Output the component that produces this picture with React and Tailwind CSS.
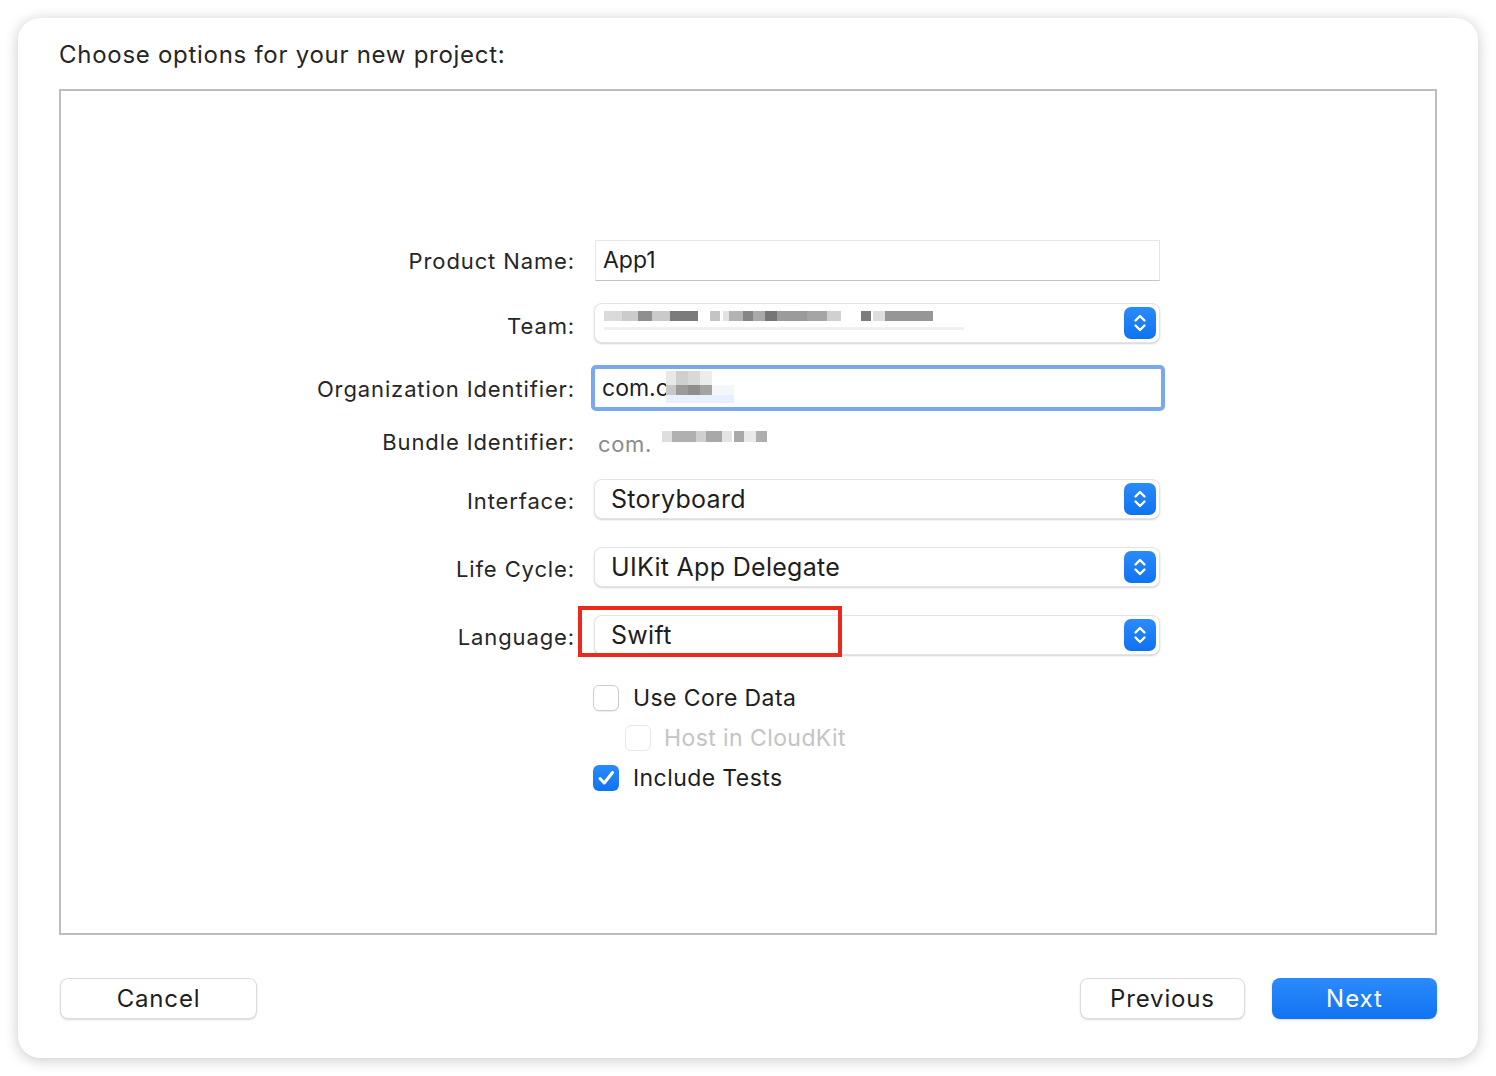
import React from "react";

const font = { fontFamily: "Inter, 'Noto Sans', 'Liberation Sans', sans-serif" };

function Stepper() {
  return (
    <div className="w-[32px] h-[32px] rounded-[7px] bg-gradient-to-b from-[#2a8bfb] to-[#0f72f0] flex items-center justify-center shrink-0">
      <svg width="32" height="32" viewBox="0 0 32 32" fill="none">
        <path d="M11.5 13.5 L16 9 L20.5 13.5" stroke="white" strokeWidth="2.4" strokeLinecap="round" strokeLinejoin="round" />
        <path d="M11.5 18.5 L16 23 L20.5 18.5" stroke="white" strokeWidth="2.4" strokeLinecap="round" strokeLinejoin="round" />
      </svg>
    </div>
  );
}

function Popup({ children }) {
  return (
    <div className="w-[566px] h-[40px] rounded-[8px] bg-white border border-[#e4e4e4] shadow-[0_1px_2px_rgba(0,0,0,0.18)] flex items-center justify-between pl-[16px] pr-[3px]">
      <div className="text-[25px] tracking-[0.012em] text-[#1e1e1e] leading-none">{children}</div>
      <Stepper />
    </div>
  );
}

function Label({ children, className = "" }) {
  return (
    <div className={"w-[514px] shrink-0 text-right text-[22px] tracking-[0.04em] text-[#262626] leading-none " + className}>
      {children}
    </div>
  );
}

function Blocks({ items, h = 10 }) {
  return (
    <div className="flex items-center">
      {items.map(([w, c, gap], i) => (
        <div key={i} style={{ width: w, height: h, background: c, marginLeft: gap || 0 }} />
      ))}
    </div>
  );
}

function Checkbox({ checked, disabled }) {
  if (checked) {
    return (
      <div className="w-[26px] h-[26px] rounded-[6px] bg-gradient-to-b from-[#2a8bfb] to-[#0f72f0] flex items-center justify-center shrink-0">
        <svg width="26" height="26" viewBox="0 0 26 26" fill="none">
          <path d="M7 13.5 L11.3 18 L19.5 7.5" stroke="white" strokeWidth="3" strokeLinecap="round" strokeLinejoin="round" />
        </svg>
      </div>
    );
  }
  return (
    <div
      className={
        "w-[26px] h-[26px] rounded-[6px] bg-white shrink-0 border " +
        (disabled ? "border-[#e8e8e8]" : "border-[#cdcdcd] shadow-[0_1px_1px_rgba(0,0,0,0.08)]")
      }
    />
  );
}

export default function App() {
  return (
    <div className="w-[1496px] h-[1076px] bg-white p-[18px]" style={font}>
      <div className="w-[1460px] h-[1040px] rounded-[22px] bg-white shadow-[0_2px_14px_rgba(0,0,0,0.22)] px-[41px] pt-[22px] flex flex-col">
        <div className="h-[30px] leading-[30px] text-[24px] tracking-[0.03em] text-[#262626]">Choose options for your new project:</div>
        <div className="mt-[19px] h-[846px] border-2 border-[#bdbdbd] pt-[149px] flex flex-col">
          {/* Product Name */}
          <div className="flex items-center h-[41px]">
            <Label>Product Name:</Label>
            <div className="ml-[20px] w-[565px] h-[41px] bg-white border border-[#e6e6e6] border-b-[#c4c4c4] flex items-center pl-[7px]">
              <span className="text-[23px] text-[#1e1e1e] leading-none">App1</span>
            </div>
          </div>
          {/* Team */}
          <div className="flex items-center h-[40px] mt-[22px]">
            <Label className="pt-[5px]">Team:</Label>
            <div className="ml-[19px]">
              <div className="w-[566px] h-[40px] rounded-[8px] bg-white border border-[#e4e4e4] shadow-[0_1px_2px_rgba(0,0,0,0.18)] flex items-center justify-between pl-[9px] pr-[3px]">
                <div className="flex flex-col gap-[6px] -mt-[6px]">
                  <div className="flex items-center">
                    <Blocks
                      items={[
                        [18, "#dadada"],
                        [16, "#cbcbcb"],
                        [14, "#8f8f8f"],
                        [18, "#cacaca"],
                        [28, "#7b7b7b"],
                        [10, "#c4c4c4", 12],
                        [6, "#e2e2e2", 3],
                        [14, "#b3b3b3"],
                        [10, "#858585"],
                        [12, "#a9a9a9"],
                        [12, "#767676"],
                        [30, "#9b9b9b"],
                        [20, "#a5a5a5"],
                        [14, "#d0d0d0"],
                        [10, "#7c7c7c", 20],
                        [12, "#dedede", 2],
                        [48, "#969696"],
                      ]}
                    />
                  </div>
                  <div className="w-[360px] h-[3px] bg-[#f1f1f1]" />
                </div>
                <Stepper />
              </div>
            </div>
          </div>
          {/* Organization Identifier */}
          <div className="flex items-center h-[46px] mt-[22px]">
            <Label className="pt-[1px]">Organization Identifier:</Label>
            <div className="ml-[16px] w-[574px] h-[46px] rounded-[5px] border-[4px] border-[#7aa8ee] bg-white flex items-center pl-[7px]">
              <span className="text-[23px] text-[#1e1e1e] leading-none">com.c</span>
              <div className="flex flex-col -ml-[3px] -mt-[2px]">
                <div className="flex">
                  <div className="w-[10px] h-[14px] bg-[#e8e8e8]" />
                  <div className="w-[12px] h-[14px] bg-[#cfcfcf]" />
                  <div className="w-[12px] h-[14px] bg-[#d8d8d8]" />
                  <div className="w-[12px] h-[14px] bg-[#ececec]" />
                </div>
                <div className="flex">
                  <div className="w-[10px] h-[10px] bg-[#c8c8c8]" />
                  <div className="w-[12px] h-[10px] bg-[#9a9a9a]" />
                  <div className="w-[12px] h-[10px] bg-[#8e8e8e]" />
                  <div className="w-[12px] h-[10px] bg-[#a3a3a3]" />
                  <div className="w-[22px] h-[10px] bg-[#f4f6fa]" />
                </div>
                <div className="w-[68px] h-[8px] bg-[#e8f0fd]" />
              </div>
            </div>
          </div>
          {/* Bundle Identifier */}
          <div className="flex items-center h-[40px] mt-[10px]">
            <Label className="pt-[1px]">Bundle Identifier:</Label>
            <div className="ml-[23px] flex items-center">
              <span className="text-[22px] tracking-[0.03em] text-[#8a8a8a] leading-none pt-[5px]">com.</span>
              <div className="-mt-[10px] flex items-center">
                <Blocks
                  h={11}
                  items={[
                    [10, "#dedede", 10],
                    [24, "#b0b0b0"],
                    [10, "#cfcfcf"],
                    [16, "#a8a8a8"],
                    [10, "#e4e4e4"],
                    [10, "#a9a9a9", 2],
                    [12, "#e9e9e9"],
                    [11, "#aeaeae"],
                  ]}
                />
              </div>
            </div>
          </div>
          {/* Interface */}
          <div className="flex items-center h-[40px] mt-[18px]">
            <Label className="pt-[4px]">Interface:</Label>
            <div className="ml-[19px]">
              <Popup>Storyboard</Popup>
            </div>
          </div>
          {/* Life Cycle */}
          <div className="flex items-center h-[40px] mt-[28px]">
            <Label className="pt-[4px]">Life Cycle:</Label>
            <div className="ml-[19px]">
              <Popup>UIKit App Delegate</Popup>
            </div>
          </div>
          {/* Language */}
          <div className="flex items-center h-[40px] mt-[28px]">
            <Label className="pt-[4px]">Language:</Label>
            <div className="ml-[19px] relative">
              <Popup>Swift</Popup>
              <div className="absolute left-[-16px] top-[-9px] w-[264px] h-[51px] border-[4px] border-[#ea2a1c] pointer-events-none" />
            </div>
          </div>
          {/* Checkboxes */}
          <div className="flex items-center h-[26px] mt-[30px] ml-[532px]">
            <Checkbox />
            <span className="ml-[14px] text-[23px] tracking-[0.018em] text-[#1e1e1e] leading-none">Use Core Data</span>
          </div>
          <div className="flex items-center h-[26px] mt-[14px] ml-[564px]">
            <Checkbox disabled />
            <span className="ml-[13px] text-[23px] tracking-[0.018em] text-[#c4c4c4] leading-none">Host in CloudKit</span>
          </div>
          <div className="flex items-center h-[26px] mt-[14px] ml-[532px]">
            <Checkbox checked />
            <span className="ml-[14px] text-[23px] tracking-[0.018em] text-[#1e1e1e] leading-none">Include Tests</span>
          </div>
        </div>
        {/* Buttons */}
        <div className="mt-[43px] flex items-center">
          <button className="ml-[1px] w-[197px] h-[41px] rounded-[8px] bg-white border border-[#dcdcdc] shadow-[0_1px_2px_rgba(0,0,0,0.15)] text-[24px] tracking-[0.035em] text-[#1e1e1e] leading-none">
            Cancel
          </button>
          <div className="flex-1" />
          <button className="w-[165px] h-[41px] rounded-[8px] bg-white border border-[#dcdcdc] shadow-[0_1px_2px_rgba(0,0,0,0.15)] text-[24px] tracking-[0.035em] text-[#1e1e1e] leading-none">
            Previous
          </button>
          <button className="ml-[27px] w-[165px] h-[41px] rounded-[8px] bg-gradient-to-b from-[#2b8afc] to-[#0f73f1] shadow-[0_1px_2px_rgba(0,0,0,0.15)] text-[24px] tracking-[0.04em] text-white leading-none">
            Next
          </button>
        </div>
      </div>
    </div>
  );
}
